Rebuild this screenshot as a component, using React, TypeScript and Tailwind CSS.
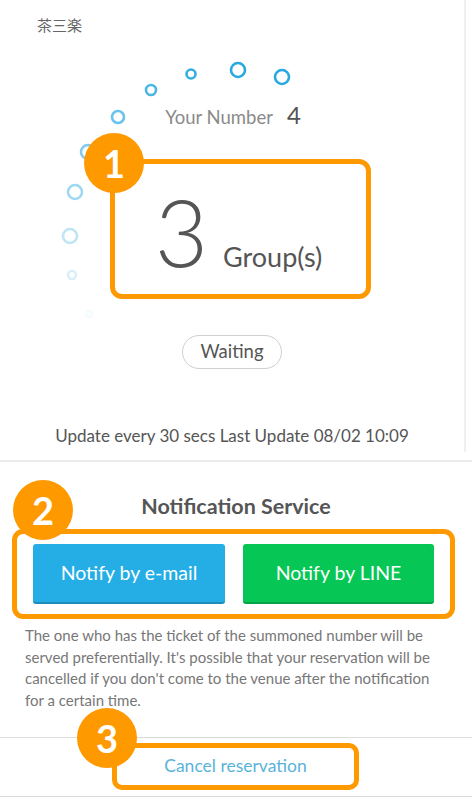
const dots = [
    { cx: 238, cy: 70, r: 7, o: 1 },
    { cx: 282, cy: 77, r: 7, o: 1 },
    { cx: 191, cy: 74, r: 4.5, o: 0.95 },
    { cx: 151, cy: 90, r: 5, o: 0.85 },
    { cx: 118, cy: 117, r: 6, o: 0.7 },
    { cx: 88, cy: 152, r: 7, o: 0.6 },
    { cx: 75, cy: 192, r: 7, o: 0.45 },
    { cx: 70, cy: 236, r: 7, o: 0.3 },
    { cx: 72, cy: 275, r: 4, o: 0.18 },
    { cx: 89, cy: 314, r: 3, o: 0.05 },
];

const Badge = ({ n, className }: { n: number, className: string }) => {
    return (
        <div className={`absolute w-[60px] h-[60px] rounded-full bg-[#ff9900] flex items-center justify-center text-white text-[38px] font-bold leading-none ${className}`}>
            {n}
        </div>
    );
};

const App = () => {
    return (
        <div className="w-[472px] h-[800px] bg-white overflow-hidden relative font-['Lato','Noto_Sans_CJK_JP',sans-serif] text-[#555]">
            {/* top panel */}
            <div className="relative h-[462px] border-b-2 border-[#ececec]">
                <div className="relative w-[466px] h-[452px] border-r-2 border-[#f0f0f0]">
                    <svg className="absolute left-0 top-0" width="466" height="452">
                        {dots.map((d, i) => (
                            <circle key={i} cx={d.cx} cy={d.cy} r={d.r} fill="none" stroke="#29a9e1" strokeWidth="2.6" opacity={d.o} />
                        ))}
                    </svg>
                    <div className="relative pt-[15px] pl-[37px] text-[15px] text-[#666] font-['Noto_Sans_CJK_JP',sans-serif] leading-[20px]">茶三楽</div>
                    <div className="relative flex items-baseline justify-center mt-[62px] pl-[2px] h-[26px]">
                        <span className="text-[18.5px] text-[#8a8a8a]">Your Number</span>
                        <span className="text-[24px] text-[#555] ml-[14px]">4</span>
                    </div>
                    <div className="relative ml-[110px] mt-[36px] w-[261px] h-[140px] border-[5px] border-[#ff9900] rounded-[12px] flex items-baseline justify-center pr-[4px] pt-[22px]">
                        <span className="text-[92px] font-light leading-none text-[#555]">3</span>
                        <span className="text-[27px] ml-[15px] text-[#555]">Group(s)</span>
                        <Badge n={1} className="left-[-31px] top-[-31px]" />
                    </div>
                    <div className="flex justify-center mt-[36px]">
                        <div className="w-[100px] h-[34px] rounded-full border border-[#cfcfcf] flex items-center justify-center text-[18.5px] text-[#555]">Waiting</div>
                    </div>
                    <div className="text-center text-[17px] text-[#555] mt-[56px] leading-[22px]">
                        Update every 30 secs Last Update 08/02 10:09
                    </div>
                </div>
            </div>

            {/* notification */}
            <div className="relative pt-[31px]">
                <h2 className="text-center text-[21.5px] font-bold text-[#555] leading-[27px]">Notification Service</h2>
                <div className="relative mx-[12px] mt-[9px] w-[443px] h-[90px] border-[5px] border-[#ff9900] rounded-[11px] flex gap-[18px] px-[16px] pt-[10px]">
                    <button className="w-[194px] h-[60px] rounded-[3px] bg-[#25ade5] border-b-2 border-[#1d8cbb] text-white text-[19.5px]">Notify by e-mail</button>
                    <button className="w-[193px] h-[60px] rounded-[3px] bg-[#06c755] border-b-2 border-[#05a347] text-white text-[19.5px]">Notify by LINE</button>
                    <Badge n={2} className="left-[-4px] top-[-54px]" />
                </div>
                <p className="px-[25px] mt-[6px] text-[15px] leading-[21.7px] text-[#777]">
                    The one who has the ticket of the summoned number will be served preferentially. It's possible that your reservation will be cancelled if you don't come to the venue after the notification for a certain time.
                </p>
            </div>

            {/* cancel */}
            <div className="absolute left-0 right-0 top-[737px] h-[60px] border-t border-b border-[#dcdcdc] pt-[5px]">
                <div className="relative ml-[112px] w-[247px] h-[47px] border-[5px] border-[#ff9900] rounded-[10px] flex items-center justify-center">
                    <span className="text-[17.5px] text-[#59b3d9]">Cancel reservation</span>
                    <Badge n={3} className="left-[-40px] top-[-40px]" />
                </div>
            </div>
        </div>
    );
};

export default App;
